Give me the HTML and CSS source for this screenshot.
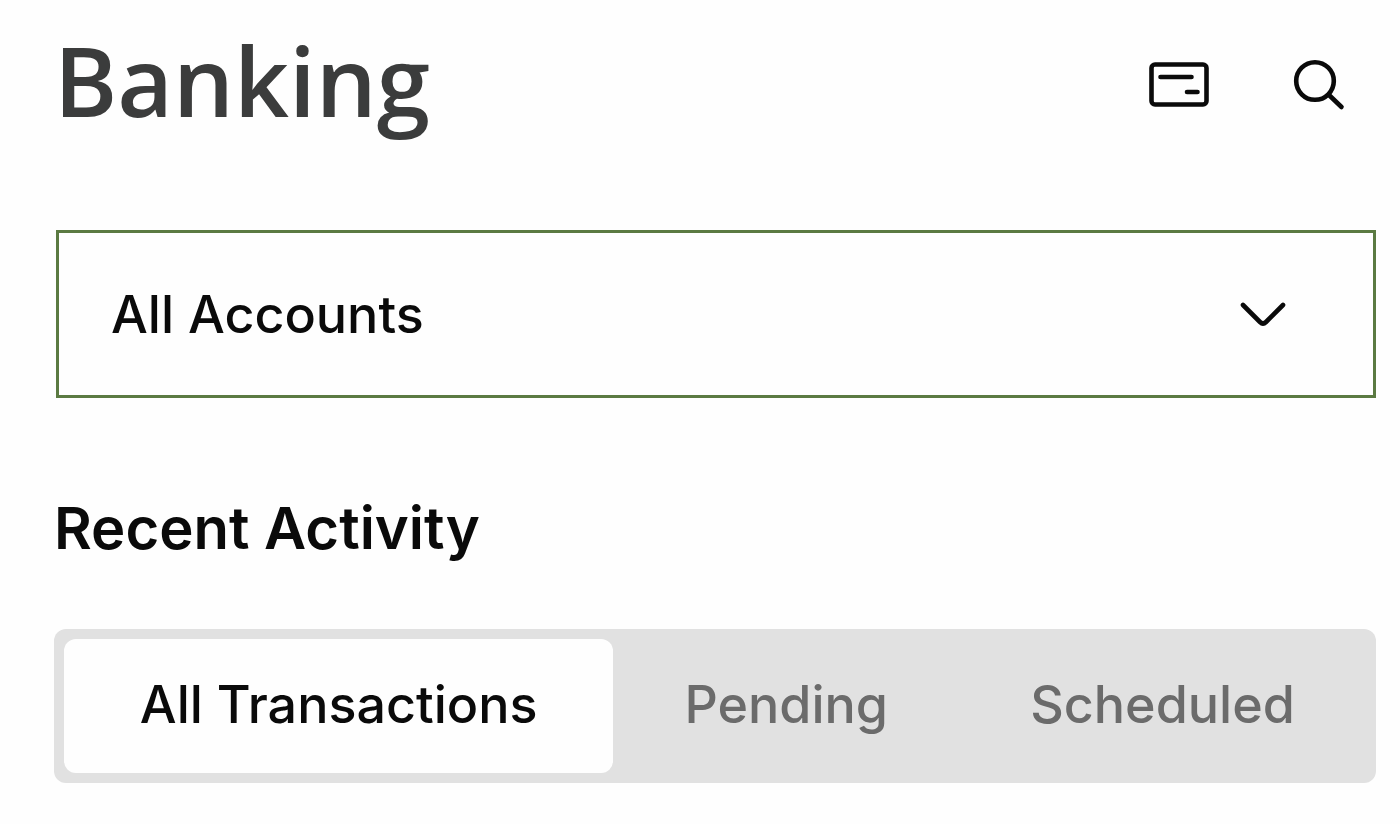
FILE: index.html
```html
<!DOCTYPE html>
<html lang="en">
<head>
    <meta charset="UTF-8">
    <meta name="viewport" content="width=device-width, initial-scale=1.0">
    <title>Banking</title>
    <link rel="stylesheet" href="styles.css">
</head>
<body>
    <!-- Page header -->
    <header class="header">
        <h1>Banking</h1>
        <div class="actions">
            <button type="button" class="icon-button" aria-label="Write a check">
                <svg width="64" height="64" viewBox="0 0 64 64" fill="none" stroke="#0a0a0a" stroke-width="4.6" stroke-linecap="round">
                    <rect x="4.5" y="12.5" width="55" height="40" rx="3.5"/>
                    <path d="M13.5 25H44.500M40 40H50.500"/>
                </svg>
            </button>
            <button type="button" class="icon-button" aria-label="Search">
                <svg width="64" height="64" viewBox="0 0 64 64" fill="none" stroke="#0a0a0a" stroke-width="4.6" stroke-linecap="round">
                    <circle cx="28" cy="29" r="18.8"/>
                    <path d="M42 43L54.500 55"/>
                </svg>
            </button>
        </div>
    </header>

    <!-- Account selection -->
    <div class="account">
        <select class="account-select" aria-label="Account">
            <option>All Accounts</option>
        </select>
        <svg class="chevron" width="48" height="28" viewBox="0 0 48 28" fill="none" stroke="#0a0a0a" stroke-width="4.6" stroke-linecap="round" stroke-linejoin="round">
            <path d="M4 5L21 22Q24 25 27 22L44 5"/>
        </svg>
    </div>

    <!-- Recent activity -->
    <section class="activity">
        <h2>Recent Activity</h2>
        <div class="tabs">
            <button type="button" class="tab active">All Transactions</button>
            <button type="button" class="tab">Pending</button>
            <button type="button" class="tab">Scheduled</button>
        </div>
    </section>

    <script>
        const tabs = document.querySelectorAll('.tab');

        // Highlight the clicked tab
        tabs.forEach((tab) => {
            tab.addEventListener('click', () => {
                tabs.forEach((other) => other.classList.remove('active'));
                tab.classList.add('active');
            });
        });
    </script>
</body>
</html>
```
FILE: styles.css
```css
* {
    box-sizing: border-box;
}
body {
    font-family: Inter, "Liberation Sans", sans-serif;
    margin: 0;
    padding: 20px 24px 40px 54px;
    background-color: #fefefe;
    color: #0a0a0a;
}
h1, h2 {
    margin: 0;
}
h1 {
    font-family: "Open Sans", sans-serif;
    font-size: 96px;
    font-weight: 600;
    line-height: 120px;
    color: #3b3c3c;
}
h2 {
    font-size: 58px;
    font-weight: 600;
    line-height: 72px;
}

/* Header */
.header {
    display: flex;
    justify-content: space-between;
    align-items: center;
}
.actions {
    display: flex;
    gap: 76px;
    padding: 8px 25px 0 0;
}
.icon-button {
    padding: 0;
    border: none;
    background: none;
    cursor: pointer;
}
.icon-button svg {
    display: block;
}

/* Account drop-down */
.account {
    display: grid;
    align-items: center;
    margin: 90px 0 94px 2px;
}
.account-select {
    grid-area: 1 / 1;
    appearance: none;
    width: 100%;
    height: 168px;
    padding: 0 52px;
    border: 3px solid #5b7a42;
    border-radius: 0;
    background-color: #fefefe;
    color: #0a0a0a;
    font-family: inherit;
    font-size: 52px;
    font-weight: 500;
    cursor: pointer;
}
.chevron {
    grid-area: 1 / 1;
    justify-self: end;
    margin-right: 89px;
    pointer-events: none;
}

/* Tabs */
.tabs {
    display: grid;
    grid-template-columns: 27fr 17fr 20fr;
    margin-top: 65px;
    padding: 10px;
    border-radius: 12px;
    background-color: #e1e1e1;
}
.tab {
    height: 134px;
    padding: 0 0 4px;
    border: none;
    border-radius: 12px;
    background: none;
    color: #6b6b6b;
    font-family: inherit;
    font-size: 52px;
    font-weight: 500;
    cursor: pointer;
}
.tab.active {
    background-color: #fefefe;
    color: #0a0a0a;
}
```
